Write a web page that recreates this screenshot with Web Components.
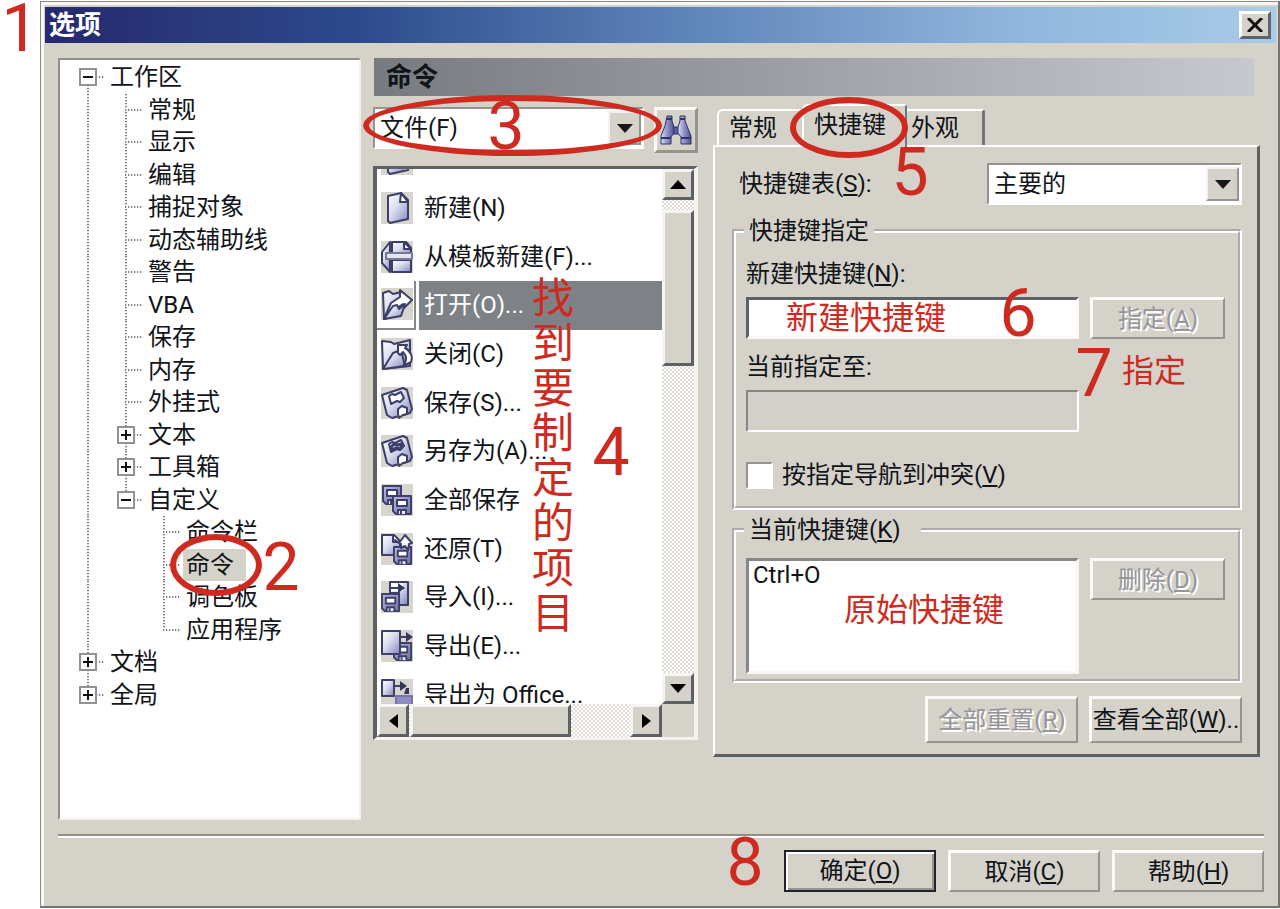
<!DOCTYPE html>
<html lang="zh-CN">
<head>
<meta charset="utf-8">
<title>选项</title>
<style>
  html { background: #fff; }
  body {
    margin: 0;
    --face: #d5d2ca;
    --shade: #96948f;
    --dark: #5d6164;
    --red: #cf2a20;
    font: 24px/32px Roboto, "Noto Sans CJK SC", sans-serif;
    color: #111418;
  }
</style>
</head>
<body>
<options-page></options-page>

<script>
const define = (name, html, setup) => {
  const template = document.createElement('template');
  template.innerHTML = '<style>*{box-sizing:border-box}[hidden]{display:none}</style>' + html;
  customElements.define(name, class extends HTMLElement {
    connectedCallback() {
      if (this.shadowRoot) return;
      const root = this.attachShadow({ mode: 'open' });
      root.append(template.content.cloneNode(true));
      if (setup) setup(this, root);
    }
  });
};

/* Red tutorial marks laid over the dialog */
define('note-mark', `
  <style>
    :host { position: absolute; left: var(--x); top: var(--y); z-index: 5; color: var(--red);
      font-size: 32px; line-height: 40px; white-space: nowrap; pointer-events: none; }
    :host([kind=digit]) { width: 40px; text-align: center; font-size: 66px; line-height: 50px; font-weight: 400; }
    :host([kind=column]) { width: 42px; font-size: 42px; line-height: 45px; white-space: normal; }
  </style><slot></slot>`, (host) => {
  host.style.setProperty('--x', host.getAttribute('x') + 'px');
  host.style.setProperty('--y', host.getAttribute('y') + 'px');
});

define('ring-mark', `
  <style>
    :host { position: absolute; z-index: 5; pointer-events: none; border: 6px solid var(--red); border-radius: 50%; box-sizing: border-box; }
  </style>`, (host) => {
  const [x, y, w, h] = host.getAttribute('box').split(' ');
  Object.assign(host.style, { left: x + 'px', top: y + 'px', width: w + 'px', height: h + 'px' });
});

define('win-button', `
  <style>
    :host { display: block; height: 42px; }
    button { width: 100%; height: 100%; padding: 0; font: inherit; color: inherit; white-space: nowrap; overflow: hidden;
      background: var(--face); border: 3px solid; border-color: #fbfaf8 var(--shade) var(--shade) #fbfaf8; border-right-width: 2px; border-bottom-width: 2px; }
    button:disabled { color: #96969a; text-shadow: 2px 2px 0 #fff; }
    :host([default]) button { border-width: 2px; border-color: #202428; box-shadow: inset 2px 2px 0 #fff, inset -2px -2px 0 var(--shade); }
    u { text-underline-offset: 3px; }
  </style>
  <button type="button"><slot></slot></button>`, (host, root) => {
  root.querySelector('button').disabled = host.hasAttribute('disabled');
});

define('win-combo', `
  <style>
    :host { display: flex; align-items: center; justify-content: space-between; }
    label { white-space: nowrap; }
    .box { position: relative; flex: none; width: var(--combo, 100%); height: 42px; display: flex;
      border: 2px solid; border-color: var(--shade) #fff #fff var(--shade); background: #fff; }
    select { appearance: none; flex: 1; min-width: 0; border: 0; padding: 0 36px 0 5px; background: transparent; font: inherit; color: inherit; outline: 0; }
    .arrow { position: absolute; right: 1px; top: 2px; bottom: 2px; width: 33px; display: grid; place-items: center; pointer-events: none;
      background: var(--face); border: 2px solid; border-color: #f3f2ee var(--shade) var(--shade) #f3f2ee; }
  </style>
  <label for="s"></label>
  <div class="box">
    <select id="s"><option></option></select>
    <span class="arrow"><svg width="16" height="9" viewBox="0 0 16 9"><path d="M0 0h16L8 9z" fill="#15181c"/></svg></span>
  </div>`, (host, root) => {
  const label = root.querySelector('label');
  if (host.hasAttribute('label')) label.innerHTML = host.getAttribute('label');
  else { label.hidden = true; root.querySelector('select').setAttribute('aria-label', host.getAttribute('name')); }
  root.querySelector('option').textContent = host.getAttribute('value');
});

define('text-field', `
  <style>
    :host { display: flex; flex-direction: column; gap: 7px; }
    input { width: 100%; height: 42px; font: inherit; padding: 0 6px; outline: 0; background: #fff;
      border: 3px solid; border-color: var(--dark) #fbfaf8 #fbfaf8 var(--dark); }
    input:disabled { background: #d3d0ca; border-width: 2px; border-color: #85858a #fff #fff #85858a; }
  </style>
  <label for="f"></label><input id="f" type="text">`, (host, root) => {
  root.querySelector('label').innerHTML = host.getAttribute('label');
  root.querySelector('input').disabled = host.hasAttribute('disabled');
});

define('check-field', `
  <style>
    :host { display: flex; align-items: center; gap: 9px; }
    input { appearance: none; margin: 0; width: 27px; height: 27px; background: #fff; border: 2px solid; border-color: var(--shade) #fff #fff var(--shade); }
  </style>
  <input id="c" type="checkbox"><label for="c"><slot></slot></label>`);

define('group-box', `
  <style>
    :host { display: block; }
    fieldset { margin: 0; padding: 0; min-width: 0; border: 4px groove #fff; }
    legend { margin-left: 8px; padding: 0 5px; height: 32px; }
    :host([wide]) legend { padding-right: 20px; }
  </style>
  <fieldset><legend></legend><slot></slot></fieldset>`, (host, root) => {
  root.querySelector('legend').innerHTML = host.getAttribute('legend');
});

define('tree-view', `
  <style>
    :host { display: block; position: relative; background: #fff; border: 2px solid; border-color: #8f8f8c #f2f1ee #f2f1ee #8f8f8c; padding: 1px 0 0 9px; box-sizing: border-box; }
    .tree { display: grid; grid-auto-rows: 1fr; height: 650px; }
    .row { display: flex; align-items: stretch; min-height: 0; }
    .cell { width: 38px; flex: none; display: grid; grid-template-columns: 18px 2px 18px; grid-template-rows: 1fr 2px 1fr; }
    .up, .down { grid-column: 2; background: repeating-linear-gradient(#7c7c7c 0 1px, #ddd 1px 2px, #fff 2px 3px); }
    .up { grid-row: 1; } .down { grid-row: 2 / 4; }
    .side { grid-area: 2 / 2 / 3 / 4; margin-right: 2px; background: repeating-linear-gradient(90deg, #7c7c7c 0 1px, #ddd 1px 2px, #fff 2px 3px); }
    .box { grid-area: 1 / 1 / 4 / 4; place-self: center; width: 18px; height: 18px; border: 2px solid #929295; background: #fff; z-index: 1; display: grid; place-items: center; }
    .label { align-self: stretch; display: flex; align-items: center; padding: 0 12px 0 3px; }
    [aria-selected=true] .label { background: #d5d2ca; }
  </style>
  <div class="tree" role="tree" aria-label="选项"></div><slot></slot>`, (host, root) => {
  /* per-level cell codes: | line, + collapsed, a first expanded, z last expanded, e last collapsed, T branch, L last branch, . blank */
  const rows = [['a', '工作区'], ['|T', '常规'], ['|T', '显示'], ['|T', '编辑'], ['|T', '捕捉对象'], ['|T', '动态辅助线'], ['|T', '警告'], ['|T', 'VBA'],
    ['|T', '保存'], ['|T', '内存'], ['|T', '外挂式'], ['|+', '文本'], ['|+', '工具箱'], ['|z', '自定义'], ['|.T', '命令栏'], ['|.T', '命令'], ['|.T', '调色板'],
    ['|.L', '应用程序'], ['+', '文档'], ['e', '全局']];
  const minus = '<svg width="12" height="12" viewBox="0 0 12 12"><path d="M1 6h10" stroke="#111" stroke-width="2"/></svg>';
  const plus = '<svg width="12" height="12" viewBox="0 0 12 12"><path d="M1 6h10M6 1v10" stroke="#111" stroke-width="2"/></svg>';
  const U = '<i class="up"></i>', D = '<i class="down"></i>', S = '<i class="side"></i>', B = (g) => `<span class="box">${g}</span>`;
  const cells = { '|': U + D, 'T': U + D + S, 'L': U + S, '.': '', 'a': D + S + B(minus), 'z': U + S + B(minus), '+': U + D + S + B(plus), 'e': U + S + B(plus) };
  root.querySelector('.tree').innerHTML = rows.map(([code, text]) =>
    `<div class="row" role="treeitem" aria-level="${code.length}" aria-selected="${text === '命令'}">` +
    [...code].map((c) => `<span class="cell">${cells[c]}</span>`).join('') + `<span class="label">${text}</span></div>`).join('');
});

define('command-list', `
  <style>
    :host { position: relative; display: grid; grid-template-columns: 1fr 32px; grid-template-rows: 535px 33px; background: var(--face);
      border: 4px solid; border-color: var(--dark) #f4f3ef #f4f3ef var(--dark); border-bottom-width: 3px; border-top-width: 3px; box-sizing: border-box; }
    .view { overflow: hidden; background: #fff; }
    .rows { display: grid; grid-auto-rows: 1fr; height: 584px; margin-top: -34px; }
    .row { display: flex; gap: 3px; min-height: 0; }
    .pic { width: 39px; flex: none; padding-left: 4px; display: flex; align-items: center; }
    .pic svg { background: #d8d5cf; }
    .text { flex: 1; display: flex; align-items: center; padding-left: 5px; white-space: pre; }
    [aria-selected=true] .pic { border-right: 2px solid #85888a; border-bottom: 2px solid #85888a; }
    [aria-selected=true] .text { background: #7e8286; color: #fff; }
    .v, .h { display: flex; background: repeating-conic-gradient(#fff 0 25%, #dedbd5 0 50%) 0 0 / 4px 4px; }
    .v { flex-direction: column; }
    .v button { height: 31px; } .h button { width: 32px; }
    .v .thumb { height: 156px; margin: 10px 0 auto; } .h .thumb { width: 161px; margin: 0 auto 0 1px; }
    button, .thumb { flex: none; padding: 0; background: var(--face); border: 3px solid; border-color: #f6f5f2 var(--dark) var(--dark) #f6f5f2; display: grid; place-items: center; }
  </style>
  <svg width="0" height="0" style="position:absolute"><defs>
    <linearGradient id="g" x2="1" y2="1"><stop offset="0" stop-color="#fff"/><stop offset=".45" stop-color="#d9dcee"/><stop offset="1" stop-color="#8285bb"/></linearGradient>
    <linearGradient id="d" x2="1" y2="1"><stop offset="0" stop-color="#b9bce0"/><stop offset="1" stop-color="#6f72ab"/></linearGradient></defs></svg>
  <div class="view"><div class="rows" role="listbox" aria-label="命令"></div></div>
  <div class="v"><button type="button" aria-label="向上滚动"><svg width="16" height="9" viewBox="0 0 16 9"><path d="M0 9h16L8 0z"/></svg></button><div class="thumb"></div><button type="button" aria-label="向下滚动"><svg width="16" height="9" viewBox="0 0 16 9"><path d="M0 0h16L8 9z"/></svg></button></div>
  <div class="h"><button type="button" aria-label="向左滚动"><svg width="9" height="14" viewBox="0 0 9 14"><path d="M9 0v14L0 7z"/></svg></button><div class="thumb"></div><button type="button" aria-label="向右滚动"><svg width="9" height="14" viewBox="0 0 9 14"><path d="M0 0v14l9-7z"/></svg></button></div>
  <slot></slot>`, (host, root) => {
  const disk = (x, y, s) => `<g transform="translate(${x} ${y}) scale(${s})"><path d="M0 0h18v18H3l-3-3z" fill="url(#d)"/><path d="M4 4h10v6H4z" fill="#fff"/><path d="M5 18v-4h8v4" fill="#eef"/><path d="M8 15v3"/></g>`;
  const tilt = (inner) => `<path d="M1 8 22 1l4 2 5 19-2 4-18 5-5-3z" fill="url(#g)"/><path d="m8 9 3-2 3 1 6-3 3 6-4 4-3-1-6 3z" fill="#fff"/>${inner}<path d="m17 22 4-3 5 2v6l-4 1-4 3-1-4z" fill="#fff"/>`;
  const icons = {
    page: '<path d="M7 4 20 1l7 7v19L9 31l-2-2z" fill="url(#g)"/><path d="m20 1-1 9h8z" fill="#fff"/>',
    template: '<path d="M9 1 1 11v11l8 9z" fill="url(#g)"/><path d="M11 1h14l5 6v7H11z" fill="url(#g)"/><path d="M23 1v7h7z" fill="#fff"/><path d="M11 19h19v12H11z" fill="url(#g)"/><path d="M5 12h26v6H5z" fill="#e4e5ef" stroke="#777a94"/>',
    open: '<path d="M2 5 8 3l4 3 8-2v22L3 31z" fill="url(#g)"/><path d="m3 31 7-16 9-6V2l12 10-9 9v-5l-6 4-3 6z" fill="#fff"/><path d="m3 31 9-13 4-1 2 4 6-5-4 12z" fill="url(#g)"/>',
    close: '<path d="m1 3 9 1 3 2 16-4v26L2 31z" fill="url(#g)"/><path d="m2 31 10-16 8-3 4 16z" fill="url(#g)"/><path d="M17 15V7h9l-2 3c6 3 8 9 6 14l-8 4c4-5 4-10 0-14l-3 3z" fill="#fff"/>',
    save: tilt(''),
    saveas: tilt('<path d="m10 12 3-3 4 1 3-1 1 3-3 2-3-1-4 2z" fill="#c9cce4" stroke-width="3"/>'),
    all: disk(2, 2, 1) + disk(12, 12, 1),
    revert: '<path d="M1 2h12l6 6v14H1z" fill="url(#g)"/><path d="M12 2v7h6" fill="#fff"/>' + disk(13, 14, 0.95) + '<path d="m14 7 4 3 6-8 7 8-3 1-1 6-3-4-4 2v-4z" fill="#fff"/>',
    import: '<path d="M9 1h18v23H9z" fill="url(#g)"/><path d="M10 2h12v8H10z" fill="#fff" stroke="none"/><path d="M9 12h10M9 7h12" fill="none"/><path d="m17 2 7 5-7 5z" fill="#35385c" stroke="none"/>' + disk(1, 13, 0.95),
    export: disk(13, 13, 0.95) + '<path d="M1 1h18v23H1z" fill="url(#g)"/><path d="M19 7h8"/><path d="m25 2 7 5-7 5z" fill="#35385c" stroke="none"/>',
    office: '<path d="M1 1h12v16H1z" fill="url(#g)"/><path d="M13 7h8" fill="none"/><path d="m19 2 7 5-7 5zM25 9h3v6h-5z" fill="#35385c" stroke="none"/><path d="M15 17h16v15H15z" fill="#8c8fc0" stroke="#7376ad"/>'
  };
  const rows = [['page', ''], ['page', '新建(N)'], ['template', '从模板新建(F)...'], ['open', '打开(O)...'], ['close', '关闭(C)'], ['save', '保存(S)...'], ['saveas', '另存为(A)...'],
    ['all', '全部保存'], ['revert', '还原(T)'], ['import', '导入(I)...'], ['export', '导出(E)...'], ['office', '导出为 Office...']];
  root.querySelector('.rows').innerHTML = rows.map(([icon, text]) =>
    `<div class="row" role="option" aria-selected="${icon === 'open'}"><span class="pic"><svg width="32" height="32" viewBox="0 0 32 32" stroke="#3c3f68" stroke-width="2" stroke-linejoin="round">${icons[icon]}</svg></span><span class="text">${text}</span></div>`).join('');
});

define('shortcut-list', `
  <style>
    :host { display: block; height: 116px; }
    select { display: block; width: 100%; height: 100%; font: inherit; color: inherit; background: #fff; padding: 0; outline: 0; overflow: hidden; border-radius: 0;
      border: 3px solid; border-color: #85878a #f8f7f4 #f8f7f4 #85878a; }
    option { padding: 0 4px; min-height: 32px; line-height: 32px; }
  </style>
  <select size="3" aria-label="当前快捷键"><option>Ctrl+O</option></select>`);

define('tab-pane', `
  <style>
    :host { display: block; position: relative; }
    .tabs { display: flex; align-items: flex-end; height: 41px; padding-left: 4px; }
    button { font: inherit; color: inherit; text-align: left; background: var(--face); height: 36px; width: 85px; padding: 0 0 0 10px; white-space: nowrap;
      border: 2px solid; border-color: #fff transparent transparent #fff; border-bottom: 0; border-radius: 6px 3px 0 0; }
    .on { position: relative; z-index: 1; width: 105px; height: 43px; margin-bottom: -2px; padding-bottom: 3px; border-right-color: #74777a; }
    .last { width: 86px; margin-left: -8px; border-right: 3px solid #74777a; }
    .pane { border: solid; border-width: 2px 3px 3px 2px; border-color: #fff var(--dark) var(--dark) #fff; padding: 16px 15px 11px 17px; }
  </style>
  <div class="tabs" role="tablist">
    <button type="button" role="tab" aria-selected="false">常规</button>
    <button type="button" role="tab" aria-selected="true" class="on">快捷键</button>
    <button type="button" role="tab" aria-selected="false" class="last">外观</button>
  </div>
  <div class="pane" role="tabpanel"><slot></slot></div>`);

define('options-window', `
  <style>
    :host { display: flex; flex-direction: column; background: var(--face); border: solid; border-width: 1px 2px 2px 1px; border-color: #8b8985 #77756f #77756f #8b8985; box-shadow: inset 3px 3px 0 #f7f6f3; box-sizing: border-box; }
    header { display: flex; align-items: center; justify-content: space-between; height: 36px; margin: 5px 2px 0 4px; padding: 0 5px 0 4px; color: #fff;
      background: linear-gradient(90deg, #27286e, #2c4a8b 25%, #5b80b6 50%, #8fb5dc 78%, #a8cbe7); }
    h1 { margin: 0; font-size: 26px; line-height: 36px; font-weight: 700; }
    header button { width: 32px; height: 28px; padding: 0; display: grid; place-items: center; background: var(--face); border: 3px solid; border-color: #fff #5c6470 #5c6470 #fff; }
    main { flex: 1; display: grid; grid-template-columns: 303fr 891fr; gap: 12px; padding: 15px 14px 14px 17px; }
    footer { position: relative; margin: 0 14px 0 17px; padding: 14px 0; border-top: 2px solid #908e8a; box-shadow: inset 0 2px 0 #fff; display: flex; justify-content: flex-end; gap: 12px; }
    ::slotted(win-button) { width: 152px; }
  </style>
  <header><h1>选项</h1><button type="button" aria-label="关闭"><svg width="16" height="14" viewBox="0 0 16 14"><path d="M1 0 15 14M15 0 1 14" stroke="#111" stroke-width="3"/></svg></button></header>
  <main><slot></slot></main>
  <footer><slot name="actions"></slot></footer>`);

define('options-page', `
  <style>
    :host { display: grid; grid-template-columns: 40px 1fr; min-height: 100vh; padding: 1px 0; box-sizing: border-box; position: relative; }
    options-window { grid-column: 2; }
    .side { display: flex; flex-direction: column; min-width: 0; padding-right: 4px; }
    .bar { margin: 0 6px 0 1px; padding-left: 12px; height: 38px; background: linear-gradient(90deg, #777a7e, #c8c9cf); font-size: 26px; line-height: 38px; font-weight: 700; }
    h2 { margin: 0; font: inherit; }
    .cols { display: grid; grid-template-columns: 325fr 547fr; gap: 15px; align-items: start; padding-top: 8px; }
    .commands { position: relative; display: flex; flex-direction: column; gap: 13px; padding-top: 3px; }
    .find { display: flex; justify-content: space-between; height: 46px; gap: 10px; }
    .find win-combo { flex: 1; align-self: flex-start; }
    .find button { width: 44px; padding: 0; display: grid; place-items: center; background: var(--face); border: 3px solid; border-color: #fbfaf8 var(--shade) var(--shade) #fbfaf8; }
    .table { --combo: 255px; padding-left: 7px; margin-bottom: 10px; }
    .assign { position: relative; padding: 11px 13px 15px 10px; display: grid; grid-template-columns: 1fr 135px; column-gap: 11px; row-gap: 12px; align-items: end; }
    .assign check-field { grid-column: 1 / 3; margin-top: 15px; }
    group-box + group-box { margin-top: 4px; }
    .current { position: relative; padding: 12px 13px 5px 10px; display: grid; grid-template-columns: 1fr 135px; gap: 11px; align-items: start; }
    .all { display: flex; justify-content: flex-end; gap: 11px; margin-top: 13px; }
    .all win-button { width: 153px; height: 47px; }
  </style>
  <note-mark kind="digit" x="0" y="4">1</note-mark>
  <options-window>
    <tree-view>
      <ring-mark box="110 474 92 62"></ring-mark>
      <note-mark kind="digit" x="201" y="483">2</note-mark>
    </tree-view>
    <div class="side">
      <div class="bar"><h2>命令</h2></div>
      <div class="cols">
        <section class="commands">
          <div class="find">
            <win-combo name="类别" value="文件(F)"></win-combo>
            <button type="button" aria-label="查找"><svg width="34" height="32" viewBox="0 0 34 32" stroke="#303466" stroke-width="1" stroke-linejoin="round"><defs><linearGradient id="b"><stop offset="0" stop-color="#dfe2f5"/><stop offset=".4" stop-color="#9a9ecd"/><stop offset="1" stop-color="#4d5192"/></linearGradient></defs><path d="M13 13h8v7h-8z" fill="#5a5e9c"/><path d="M8 2h5v5l2 6v6l-3 4v7H2v-8l4-10z" fill="url(#b)"/><path d="M21 2h5v5l2 5 4 10v8H22v-7l-3-4v-6l2-6z" fill="url(#b)"/><path d="M8 5h5M21 5h5M2 24h10M22 24h10" stroke-width="2"/></svg></button>
          </div>
          <command-list>
            <note-mark kind="column" x="155" y="107">找到要制定的项目</note-mark>
            <note-mark kind="digit" x="214" y="259">4</note-mark>
          </command-list>
          <ring-mark box="-10 -9 299 61"></ring-mark>
          <note-mark kind="digit" x="113" y="-2">3</note-mark>
        </section>
        <tab-pane>
          <win-combo class="table" label="快捷键表(<u>S</u>):" value="主要的"></win-combo>
          <group-box legend="快捷键指定">
            <div class="assign">
              <text-field label="新建快捷键(<u>N</u>):"></text-field>
              <win-button disabled>指定(<u>A</u>)</win-button>
              <text-field label="当前指定至:" disabled></text-field>
              <check-field>按指定导航到冲突(<u>V</u>)</check-field>
              <note-mark x="50" y="51">新建快捷键</note-mark>
              <note-mark kind="digit" x="262" y="42">6</note-mark>
              <note-mark kind="digit" x="338" y="102">7</note-mark>
              <note-mark x="386" y="104">指定</note-mark>
            </div>
          </group-box>
          <group-box legend="当前快捷键(<u>K</u>)" wide>
            <div class="current">
              <shortcut-list></shortcut-list>
              <win-button disabled>删除(<u>D</u>)</win-button>
              <note-mark x="108" y="44">原始快捷键</note-mark>
            </div>
          </group-box>
          <div class="all">
            <win-button disabled>全部重置(<u>R</u>)</win-button>
            <win-button>查看全部(<u>W</u>)..</win-button>
          </div>
          <ring-mark box="77 -7 118 61"></ring-mark>
          <note-mark kind="digit" x="177" y="44">5</note-mark>
        </tab-pane>
      </div>
    </div>
    <note-mark slot="actions" kind="digit" x="667" y="2">8</note-mark>
    <win-button slot="actions" default>确定(<u>O</u>)</win-button>
    <win-button slot="actions">取消(<u>C</u>)</win-button>
    <win-button slot="actions">帮助(<u>H</u>)</win-button>
  </options-window>`);
</script>
</body>
</html>
